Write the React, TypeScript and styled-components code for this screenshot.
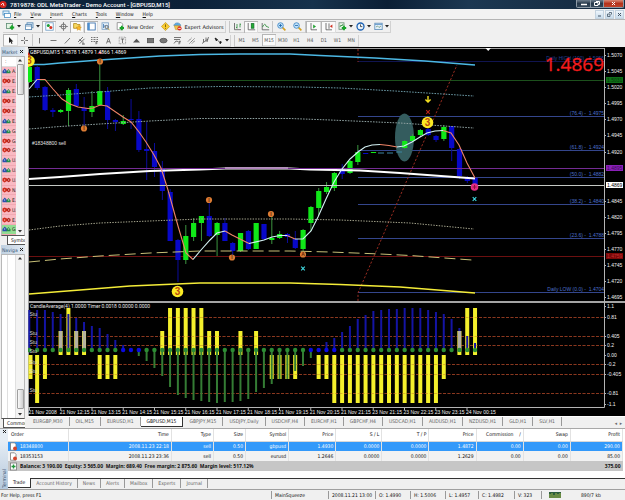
import React from "react";
import styled, { createGlobalStyle } from "styled-components";

const UI = '"DejaVu Sans Condensed", "DejaVu Sans", sans-serif';
const CHART = '"Liberation Sans", Arial, sans-serif';

const Global = createGlobalStyle`
  * { box-sizing: border-box; }
  body { margin: 0; background: #f0f0f0; }
  button { font: inherit; color: inherit; border: 0; padding: 0; margin: 0; background: none; }
`;

const Window = styled.div`
  display: flex;
  flex-direction: column;
  min-height: 100vh;
  overflow: hidden;
  font: 5px/8px ${UI};
  color: #111;
  background: #f0f0f0;
`;

/* ---------- title and menu ---------- */

const TitleBar = styled.header`
  display: flex;
  align-items: center;
  height: 9px;
  gap: 2px;
  color: #fff;
  background: linear-gradient(90deg, #10263c 0%, #0c2138 30%, #16324c 50%, #0b1f35 62%, #1c3852 75%, #14293f 100%);
`;

const Title = styled.h1`
  flex: 1;
  margin: 0;
  font: 500 6px/9px Roboto, "Noto Sans", sans-serif;
  white-space: nowrap;
`;

const WindowButtons = styled.div`
  display: flex;
  align-self: flex-start;
  height: 8px;
  margin-right: 1px;
  border: 1px solid #8d9aa6;
  border-top: 0;
  border-radius: 0 0 2px 2px;
  overflow: hidden;
`;

const WindowButton = styled.button<{ $close?: boolean }>`
  display: grid;
  place-items: center;
  width: ${(p) => (p.$close ? 20 : 13)}px;
  background: ${(p) =>
    p.$close
      ? "linear-gradient(#d98a78, #b5331c 50%, #c0442c)"
      : "linear-gradient(#6f7f8e, #26384a 50%, #34485a)"};
  border-left: 1px solid #8d9aa6;
  &:first-child { border-left: 0; }
`;

const MenuBar = styled.nav`
  display: flex;
  align-items: center;
  height: 11px;
  padding-left: 2px;
  background: #f2f2f2;
  border-bottom: 1px solid #b4b4b4;
`;

const MenuItems = styled.div`
  display: flex;
  flex: 1;
  gap: 9px;
  padding-left: 3px;
`;

const MenuItem = styled.button`
  line-height: 9px;
  &::first-letter { text-decoration: underline; }
`;

const MdiButton = styled.button`
  display: grid;
  place-items: center;
  width: 9px;
  height: 9px;
  margin-right: 1px;
  background: linear-gradient(#eef5fb, #c9dcec);
  border: 1px solid #c3d2df;
`;

/* ---------- toolbars ---------- */

const Toolbar = styled.div`
  display: flex;
  align-items: center;
  height: 14px;
  padding-left: 3px;
  & + & { height: 13px; }
`;

const Band = styled.div`
  display: flex;
  align-items: center;
  height: 12px;
  border: 1px solid #d2d2d2;
  border-width: 0 1px 1px 0;
  & + & { margin-left: 3px; border-left: 1px solid #c6c6c6; }
`;

const Group = styled.div<{ $n: number; $w: number }>`
  display: grid;
  grid-template-columns: repeat(${(p) => p.$n}, 1fr);
  width: ${(p) => p.$w}px;
  height: 12px;
  & + & { border-left: 1px solid #c6c6c6; }
`;

const Tool = styled.button<{ $on?: boolean }>`
  display: grid;
  place-items: center;
  height: 12px;
  color: #555;
  background: ${(p) => (p.$on ? "#fafafa" : "transparent")};
  box-shadow: ${(p) => (p.$on ? "inset 1px 1px #b5b5b5, inset -1px -1px #dcdcdc" : "none")};
`;

const WideTool = styled.button<{ $w: number }>`
  display: flex;
  align-items: center;
  justify-content: center;
  gap: 2px;
  width: ${(p) => p.$w}px;
  height: 12px;
  font-family: "DejaVu Sans", sans-serif;
  white-space: nowrap;
`;

/* ---------- workspace ---------- */

const Workspace = styled.main`
  display: grid;
  grid-template-columns: 28px minmax(0, 1fr);
`;

const SideColumn = styled.aside`
  display: flex;
  flex-direction: column;
  padding: 0 3px 0 1px;
  overflow: hidden;
`;

const PanelHead = styled.div`
  display: flex;
  justify-content: space-between;
  align-items: center;
  height: 9px;
  padding: 0 1px;
  color: #3c5a78;
  background: linear-gradient(90deg, #bfd0e0, #e2eaf2);
`;

const PanelBody = styled.div<{ $h?: number }>`
  display: flex;
  ${(p) => (p.$h ? `height: ${p.$h}px;` : "flex: 1;")}
  background: #fff;
  border: 1px solid #b8b8b8;
  border-bottom-color: #555;
  overflow: hidden;
`;

const Quotes = styled.div`
  display: flex;
  flex-direction: column;
  flex: 1;
  overflow: hidden;
`;

const QuotesHead = styled.div`
  height: 10px;
  padding-left: 3px;
  border-bottom: 1px solid #ddd;
`;

const Quote = styled.div<{ $up: boolean; $hit?: boolean }>`
  display: flex;
  flex: 1;
  align-items: center;
  gap: 1px;
  white-space: nowrap;
  color: #222;
  background: ${(p) => (p.$hit ? "#93dc93" : "#f9b9c2")};
  border-bottom: 1px solid #f1a9b3;
  & > svg { color: ${(p) => (p.$up ? "#2a4fae" : "#d02c1c")}; flex: none; }
`;

const Tree = styled.div`
  flex: 1;
  margin-left: 5px;
  border: 1px solid #e0e0e0;
  border-width: 0 1px;
`;

const Scroll = styled.div`
  display: flex;
  flex-direction: column;
  align-items: center;
  justify-content: space-between;
  width: 8px;
  padding: 2px 0;
  background: #f3f3f3;
`;

const Thumb = styled.div<{ $h: number; $low?: boolean }>`
  width: 7px;
  height: ${(p) => p.$h}px;
  margin: ${(p) => (p.$low ? "auto 0 4px" : "2px 0 auto")};
  background: linear-gradient(90deg, #fafafa, #cfcfcf);
  border: 1px solid #a0a0a0;
  border-radius: 1px;
`;

const SideTab = styled.button<{ $inset: number }>`
  align-self: stretch;
  height: 9px;
  margin-left: ${(p) => p.$inset}px;
  padding-left: 3px;
  overflow: hidden;
  text-align: left;
  white-space: nowrap;
  line-height: 8px;
  background: #fff;
  border: 1px solid #555;
  border-width: 0 0 1px 1px;
`;

const ChartColumn = styled.section`
  display: flex;
  flex-direction: column;
`;

const Plot = styled.svg`
  display: block;
  width: 100%;
  height: auto;
  background: #000;
  font: 5px ${CHART};
`;

const ChartTabs = styled.div`
  display: flex;
  height: 12px;
  padding-right: 3px;
  color: #666;
  border-top: 1px solid #fff;
`;

const ChartTab = styled.button<{ $on?: boolean }>`
  height: ${(p) => (p.$on ? 10 : 9)}px;
  padding: 0 6px;
  line-height: 9px;
  white-space: nowrap;
  color: ${(p) => (p.$on ? "#111" : "inherit")};
  background: ${(p) => (p.$on ? "#fff" : "transparent")};
  border-right: 1px solid ${(p) => (p.$on ? "#333" : "#999")};
  border-bottom: ${(p) => (p.$on ? "1px solid #333" : "0")};
  &:first-child { padding-left: 5px; }
`;

const Spacer = styled.span`
  flex: 1;
`;

/* ---------- terminal ---------- */

const Terminal = styled.section`
  display: grid;
  grid-template-columns: 8px minmax(0, 1fr);
  border-top: 1px solid #a8a8a8;
`;

const TerminalSide = styled.div`
  display: flex;
  flex-direction: column;
  align-items: center;
  justify-content: space-between;
  padding: 0 0 1px;
  background: linear-gradient(#e6edf4 20%, #b4c8dc);
  color: #35506e;
`;

const Vertical = styled.span`
  writing-mode: vertical-rl;
  transform: rotate(180deg);
  line-height: 8px;
`;

const TerminalBody = styled.div`
  padding-right: 2px;
  background: #fff;
`;

const Orders = styled.table`
  width: 100%;
  table-layout: fixed;
  border-collapse: collapse;
  th, td {
    height: 10px;
    padding: 0 2px;
    font-weight: normal;
    line-height: 9px;
    text-align: right;
    white-space: nowrap;
    border-right: 1px solid #e2e2e2;
  }
  th { height: 12px; border-bottom: 1px solid #d8d8d8; }
  th:first-child { text-align: left; padding-left: 3px; }
  td:first-child { text-align: left; padding-left: 1px; }
`;

const OrderRow = styled.tr<{ $selected?: boolean }>`
  color: ${(p) => (p.$selected ? "#fff" : "#111")};
  background: ${(p) => (p.$selected ? "#3399fa" : "#f2f2f2")};
`;

const TotalRow = styled.tr`
  background: #c6c6c6;
  && td { font: bold 5px/9px "Noto Sans", "Open Sans", sans-serif; border: 0; }
`;

const WithIcon = styled.span`
  display: flex;
  align-items: center;
  gap: 2px;
`;

const TerminalTabs = styled.div`
  display: flex;
  height: 11px;
  margin: 7px -2px 0 0;
  color: #666;
  background: #f0f0f0;
  border-top: 1px solid #333;
`;

const TerminalTab = styled.button<{ $on?: boolean }>`
  height: ${(p) => (p.$on ? 10 : 9)}px;
  margin-top: ${(p) => (p.$on ? -1 : 0)}px;
  padding: 0 5px;
  line-height: 9px;
  color: ${(p) => (p.$on ? "#111" : "inherit")};
  background: ${(p) => (p.$on ? "#fff" : "transparent")};
  border-right: 1px solid ${(p) => (p.$on ? "#333" : "#999")};
  border-bottom: ${(p) => (p.$on ? "1px solid #333" : "0")};
`;

const StatusBar = styled.footer`
  display: grid;
  grid-template-columns: 271fr 57fr 47fr 35fr 35fr 33fr 36fr 27fr 84fr;
  align-items: center;
  height: 11px;
  border-top: 1px solid #a0a0a0;
`;

const Status = styled.span`
  display: flex;
  align-items: center;
  gap: 20px;
  padding-left: 3px;
  white-space: nowrap;
  border-left: 1px solid #999;
  &:first-child { border: 0; padding-left: 1px; }
  &:last-child { padding-left: 7px; }
`;

/* ---------- icons ---------- */

const Ico = ({ children, w = 9 }: { children: React.ReactNode; w?: number }) => (
  <svg width={w} height={9} viewBox={`0 0 ${w} 9`} fill="none" stroke="currentColor" strokeWidth={0.8} aria-hidden="true">
    {children}
  </svg>
);

const Caret = () => (
  <svg width="4" height="3" viewBox="0 0 4 3" aria-hidden="true"><path d="M0 0h4L2 2.5z" fill="#222" /></svg>
);

const Cross = ({ color = "#222" }: { color?: string }) => (
  <svg width="5" height="5" viewBox="0 0 5 5" aria-hidden="true"><path d="M1 1l3 3M4 1L1 4" stroke={color} strokeWidth="1" /></svg>
);

const Arrow = ({ d }: { d: string }) => (
  <svg width="4" height="3" viewBox="0 0 4 3" aria-hidden="true"><path d={d} fill="#333" /></svg>
);

const Plus = ({ x, y }: { x: number; y: number }) => (
  <path d={`M${x - 2.2} ${y}h4.4M${x} ${y - 2.2}v4.4`} stroke="#18a428" strokeWidth="1.8" />
);

const I = {
  logo: <Ico w={8}><circle cx="3" cy="4.5" r="3.6" fill="#d3241c" stroke="none" /><path d="M1 5l2-2 1 3" stroke="#fff" /></Ico>,
  mdi: <Ico><rect x="1" y="1" width="6" height="4" fill="#dff0fc" stroke="#4a8ec2" /><rect x="2.5" y="3.5" width="6" height="4" fill="#fff" stroke="#4a8ec2" /></Ico>,
  newChart: <Ico><rect x=".5" y="1.5" width="6" height="5" fill="#e4f4e4" stroke="#5c8c74" /><Plus x={6} y={5.5} /></Ico>,
  profiles: <Ico><rect x="2" y=".8" width="6" height="5" fill="#d5e8f8" stroke="#5484ae" /><rect x=".6" y="2.6" width="6" height="5" fill="#fff" stroke="#5484ae" /><path d="M1 4h5" stroke="#5484ae" /></Ico>,
  market: <Ico><rect x=".8" y=".8" width="7.4" height="7.4" fill="#fff" stroke="#6a9ac4" /><circle cx="3.3" cy="3.4" r="1.5" fill="#1a9c34" stroke="none" /><circle cx="5.8" cy="5.6" r="1.5" fill="#d53424" stroke="none" /></Ico>,
  target: <Ico><circle cx="4.5" cy="4.5" r="2.5" /><path d="M4.5 0v9M0 4.5h9" strokeWidth=".6" /></Ico>,
  folder: <Ico><path d="M.6 1.5h3l.6 1H7v3.8H.6z" fill="#f6d860" stroke="#b48c20" /><path d="M5.8 3.5l.8 1.6 1.8.2-1.3 1.2.3 1.8-1.6-.9-1.6.9.3-1.8L3 5.3l2-.2z" fill="#fcb828" stroke="#c88410" strokeWidth=".4" /></Ico>,
  terminal: <Ico><rect x=".8" y="1" width="7.4" height="7" fill="#fff" stroke="#2c66a8" /><rect x=".8" y="1" width="2" height="7" fill="#4b8fd0" stroke="none" /></Ico>,
  tester: <Ico><rect x="1" y=".8" width="6.5" height="6.5" fill="#e4f0fa" stroke="#7aa0c4" /><path d="M2.5 2v4M4 3v2" stroke="#3874b0" /><circle cx="5.6" cy="5" r="1.6" fill="#cfe4f4" /><path d="M6.8 6.2l1.7 2" stroke="#c49420" /></Ico>,
  order: <Ico><path d="M1.2.6h4l1.5 1.5v5.6H1.2z" fill="#fff" stroke="#888" /><Plus x={5.8} y={6} /></Ico>,
  diamond: <Ico><path d="M4.5.4l4.1 4.1-4.1 4.1L.4 4.5z" fill="#f8cc30" stroke="#b88a10" strokeWidth=".6" /><path d="M4.5 2.4v2.8M4.5 6v.8" stroke="#704c00" /></Ico>,
  expert: <Ico><path d="M.8 3.5C1.5 0 7 0 7.8 3.5z" fill="#58a8e0" stroke="#2c74b0" strokeWidth=".5" /><path d="M1.3 3.8h6l-1 3.8H2.5z" fill="#f2c850" stroke="#b88c20" strokeWidth=".5" /><circle cx="6.5" cy="6.4" r="2.1" fill="#da2c20" stroke="none" /><path d="M5.2 6.4h2.6" stroke="#fff" /></Ico>,
  bars: <Ico><path d="M1.5 1v6.7h6.5" stroke="#555" /><path d="M4 2v4.5M4 5.5h-1M7 1.5v4M7 2.3h1" stroke="#2a8c38" /></Ico>,
  candles: <Ico><path d="M1.2 1v6.8h7" stroke="#555" /><rect x="4.3" y="1.6" width="2.6" height="4.6" fill="#20b030" stroke="#14702c" /></Ico>,
  line: <Ico><path d="M1.2 1v6.8h7" stroke="#555" /><path d="M1.5 5Q4 0 5 4.2L8 5.5" stroke="#2a8c38" /></Ico>,
  zoomIn: <Ico><path d="M5.4 5.4l3 3" stroke="#d4a024" strokeWidth="1.6" /><circle cx="3.5" cy="3.5" r="2.8" fill="#bfe2fa" stroke="#3880c0" /><path d="M2 3.5h3M3.5 2v3" stroke="#1c64a8" /></Ico>,
  zoomOut: <Ico><path d="M5.4 5.4l3 3" stroke="#d4a024" strokeWidth="1.6" /><circle cx="3.5" cy="3.5" r="2.8" fill="#bfe2fa" stroke="#3880c0" /><path d="M2 3.5h3" stroke="#1c64a8" /></Ico>,
  scroll: <Ico><path d="M2 1v6.8h6" stroke="#555" /><path d="M4.2 2.5v4L7 4.5z" fill="#20a030" stroke="none" /></Ico>,
  shift: <Ico><path d="M2 1v6.8h6M5 1.4v5.4" stroke="#555" /><path d="M8.4 2.5v3.6L5.8 4.3z" fill="#d03020" stroke="none" /></Ico>,
  indicators: <Ico><rect x="1" y=".8" width="5" height="6.5" fill="#e6f2e6" stroke="#6a8a74" /><path d="M2 5l1-2 1 1 1-2" stroke="#2a8c38" /><Plus x={6} y={6} /></Ico>,
  clock: <Ico><circle cx="4.5" cy="4.5" r="3.5" fill="#eaf4fc" stroke="#1c62b4" strokeWidth="1.3" /><path d="M4.5 2.4v2.2h1.8" stroke="#333" /></Ico>,
  template: <Ico><rect x=".8" y="1.2" width="7.4" height="6.4" fill="#e2effa" stroke="#5c8cb8" /><path d="M1 2.4h7" stroke="#4a86c0" /><path d="M2 5l1.5-1L5 5.5 7 4" stroke="#4c7c4c" strokeWidth=".6" /></Ico>,
  cursor: <Ico><path d="M3 1v6l1.5-1.3L5.6 8l.9-.4L5.5 5.4h1.8z" fill="#222" stroke="none" /></Ico>,
  cross: <Ico><path d="M4.5 1v2.7M4.5 5.3V8M1 4.5h2.7M5.3 4.5H8" /></Ico>,
  vline: <Ico><path d="M4.5 2v5.5" /></Ico>,
  hline: <Ico><path d="M1.5 4.5H7.5" /></Ico>,
  trend: <Ico><path d="M1.8 7.5L7 2" /></Ico>,
  channel: <Ico><path d="M1 6l5-5M2.5 7.8l5-5M2 3.5l3 2M5 8h3M6 5.5v3" /></Ico>,
  fibo: <Ico><path d="M1 1.5h7M1 3.5h7M1 5.5h4" strokeDasharray="1 .5" /><path d="M6 5.3v3M6 5.5h2M6 7h1.5" /></Ico>,
  textA: <Ico><path d="M2.5 7.5L4.5 2l2 5.5M3.2 5.7h2.6" /></Ico>,
  label: <Ico><rect x="1.2" y="1.2" width="6.4" height="6.6" strokeWidth=".5" strokeDasharray="1 .6" /><path d="M2.8 3h3.4M4.5 3v4" /></Ico>,
  tri: <Ico><path d="M1 6.5L4.5 2.8 8 6.5z" fill="#555" stroke="none" /></Ico>,
  rect: <Ico><rect x="1.4" y="2.5" width="6.2" height="4.2" fill="#777" stroke="#555" /></Ico>,
  oval: <Ico><ellipse cx="4.5" cy="4.6" rx="3.6" ry="2.3" fill="#777" stroke="#555" /></Ico>,
  fan: <Ico><path d="M1 1.5h7M1 3.5h6M1 7.5q2-4 4-2" /><path d="M6 5v3.4M6 5.3h2M6 6.8h1.5" /></Ico>,
  parallels: <Ico><path d="M1 5.5L4.5 2M2.5 7.5l5-5M5 7.5l3-3" strokeDasharray="1.5 .4" /></Ico>,
  fork: <Ico><path d="M1 7.5L7 3M2.5 3v3M5 1.5v4M7.5 1L6 6" /></Ico>,
  arrows: <Ico><path d="M1 2l2.5 1.5L2.4 5z" fill="#333" /><path d="M4 4.5l2 2M6.5 5v3M5 7l3-1" /></Ico>,
};

type ToolDef = [keyof typeof I, string, boolean?];

const Tools = ({ items, w }: { items: ToolDef[]; w: number }) => (
  <Group $n={items.length} $w={w}>
    {items.map(([k, name, on]) => (
      <Tool key={k} $on={on} aria-label={name}>{I[k]}</Tool>
    ))}
  </Group>
);

const Drop = ({ k, name, w }: { k: keyof typeof I; name: string; w: number }) => (
  <WideTool $w={w} aria-label={name}>{I[k]}<Caret /></WideTool>
);

/* ---------- chart data ---------- */

const STEP = 7.82;
const bx = (n: number) => 29.3 + STEP * n;

// [bar, high, top, bottom, low, rising]
const candles: [number, number, number, number, number, 0 | 1][] = [
  [0, 67, 67, 82, 83, 1], [1, 66, 67, 88, 90, 0], [2, 86, 87, 110, 111, 0], [3, 108, 110, 112, 117, 0],
  [4, 109, 110, 112, 113, 1], [5, 88, 90, 111, 126, 1], [6, 84, 89, 106, 107, 0], [7, 97, 108, 111, 127, 0],
  [8, 91, 106, 112, 117, 1], [9, 62, 91, 105, 106, 1], [10, 87, 91, 120, 129, 0], [11, 119, 120, 122, 131, 0],
  [12, 115, 121, 124, 125, 1], [13, 99, 119, 120, 129, 0], [14, 111, 119, 150, 152, 0], [15, 122, 149, 151, 180, 0],
  [16, 143, 151, 167, 177, 0], [17, 161, 169, 191, 200, 0], [18, 189, 192, 241, 241, 0], [19, 239, 240, 260, 282, 0],
  [20, 225, 236, 260, 264, 1], [21, 218, 223, 237, 241, 1], [22, 216, 216, 223, 241, 1], [23, 203, 216, 236, 237, 0],
  [24, 222, 223, 235, 256, 1], [25, 218, 223, 241, 241, 0], [26, 242, 243, 251, 256, 0], [27, 233, 233, 251, 252, 1],
  [28, 230, 231, 249, 250, 0], [29, 223, 223, 249, 249, 1], [30, 224, 224, 239, 240, 0], [31, 217, 238, 240, 244, 1],
  [32, 231, 234, 238, 239, 1], [33, 233, 234, 237, 243, 0], [34, 231, 239, 248, 249, 0], [35, 229, 230, 249, 253, 1],
  [36, 206, 207, 223, 231, 1], [37, 188, 191, 208, 215, 1], [38, 182, 187, 192, 194, 1], [39, 172, 173, 188, 191, 1],
  [40, 164, 169, 174, 179, 0], [41, 160, 161, 173, 174, 1], [42, 145, 152, 162, 165, 1], [43, 153, 153, 154, 154, 0],
  [44, 152, 152, 153, 153, 1], [48, 140, 141, 148, 149, 1], [49, 134, 136, 141, 142, 1], [50, 129, 130, 135, 137, 1],
  [51, 128, 129, 135, 136, 0], [52, 135, 136, 140, 142, 0], [53, 125, 127, 139, 141, 1], [54, 126, 126, 148, 161, 0],
  [55, 148, 149, 176, 179, 0], [56, 176, 177, 181, 183, 0], [57, 177, 178, 186, 187, 0],
];

const AVG_UP = "#d4f2f4";
const AVG_DOWN = "#f08468";
const average: [string, string][] = [
  [AVG_UP, "29,89 37,79.5"],
  [AVG_DOWN, "37,79.5 45,79.5 53,89 62,99 70,104 78,107 88,108.5 93,108 100,105 107,106 123,117 131,122 139,132 146,142 154,155 161,168 168,190 178,226 186,253 193,259.5"],
  [AVG_UP, "193,259.5 201,250 210,240 217,233 225,231"],
  [AVG_DOWN, "225,231 232,235 240,239 249,243.5"],
  [AVG_UP, "249,243.5 264,240 272,237 280,235.5 287,235.5"],
  [AVG_DOWN, "287,235.5 295,239"],
  [AVG_UP, "295,239 303,239 311,231 318,217 326,199 334,182 342,169 350,159 358,152 365,147 372,145 380,144.5"],
  [AVG_DOWN, "380,144.5 389,145.5 397,147"],
  [AVG_UP, "397,147 404,146 412,142 420,137 427,133 435,131 443,130.5"],
  [AVG_DOWN, "443,130.5 451,133 459,145 467,163 475,178"],
];

const bands: { c: string; w: number; dash?: string; p: string }[] = [
  { c: "#4cb8e4", w: 1.6, p: "29,64.5 44,64.5 60,63 100,60 130,58 160,56 200,54.5 240,54 290,54 320,55.5 375,58 425,61 475,65" },
  { c: "#6a98a4", w: 1, dash: "1.6 1.2", p: "29,97 60,95 100,92 150,88 220,86.5 300,87 340,88 395,91 474,96" },
  { c: "#8ea0a0", w: 1, dash: "1.6 1.2", p: "29,129 60,126.5 100,124 150,121 200,118.5 290,118.5 330,120 400,123 474,128" },
  { c: "#a8a890", w: 1, dash: "1.4 1.3", p: "29,230 60,226 100,223 150,221 200,219 290,219 340,220 410,223 474,229" },
  { c: "#c8c078", w: 1, dash: "11 5", p: "29,262 60,259 100,256 150,253 200,251 290,251 330,252 380,254 410,255.5 472,260" },
  { c: "#f4ec38", w: 1.7, p: "29,294 80,290 130,286 200,283 290,283 340,284.5 400,287 475,293" },
  { c: "#ffffff", w: 1.9, p: "29,179 60,177 100,174 150,171 200,169.5 225,168.5 290,168.5 310,169.5 360,170.5 400,173 475,178.5" },
];

const fibs: [number, string][] = [
  [61, "Daily HIGH (100) - 1.5056"], [116, "(76.4) -  1.4975"], [150, "(61.8) -  1.4924"], [177, "(50.0) -  1.4882"],
  [204, "(38.2) -  1.4840"], [238, "(23.6) -  1.4788"], [292, "Daily LOW (0.0) -  1.4704"],
];

const prices: [number, string][] = [
  [55, "1.5070"], [71, "1.5045"], [87, "1.5020"], [103, "1.4995"], [119, "1.4970"], [135, "1.4945"], [152, "1.4920"],
  [201, "1.4845"], [217, "1.4820"], [233, "1.4795"], [249, "1.4770"], [265, "1.4745"], [281, "1.4720"], [297, "1.4695"],
  [306, "1.1"], [317, "0.81"], [336, "0.405"], [345, "0.2"], [355, "0.00"], [364, "-0.2"], [374, "-0.405"], [393, "-0.81"], [404, "-1.1"],
];

const marks: [number, string, string, string][] = [
  [80, "#0f6e18", "#063c0a", "1.5031"], [168, "#8a20b8", "#3c0858", "1.4895"],
  [185, "#ffffff", "#000", "1.4869"], [256, "#7c0808", "#c03030", "1.4759"],
];

const times = ["21 Nov 2008", "21 Nov 12:15", "21 Nov 13:15", "21 Nov 14:15", "21 Nov 15:15", "21 Nov 16:15", "21 Nov 17:15",
  "21 Nov 18:15", "21 Nov 19:15", "21 Nov 20:15", "21 Nov 21:15", "23 Nov 21:15", "23 Nov 22:15", "23 Nov 23:15", "24 Nov 00:15"];

const levels = [317.5, 336.5, 345.5, 364.5, 374.5, 393.5];

// end of each momentum bar, measured from the row of dots
const momentum: (number | null)[] = [
  310, 310, 310, 312, 314, 314, 318, 322, 326, 328, 334, 340, 345, null, 356, 361, 368, 376, 387, 395, 398, 400, 401, 402, 403,
  402, 402, 401, 399, 392, 388, 384, 379, 379, 371, 366, 358, null, 342, 338, 332, 326, 319, 315, 311, 310, 309, 309, 308, 308,
  308, 310, 312, 314, 319, 328, 336, 343,
];
const blueDots = [12, 13, 14, 36, 37, 38, 39];

const span = (a: number, b: number) => Array.from({ length: b - a + 1 }, (_, i) => a + i);
const yellow: [number[], number, number][] = [
  [[5, ...span(18, 22), 56, 57], 308, 355],
  [[4, 6, 7, 17, 23, 24, 27, 29, 55], 331, 355],
  [[0, 2, 9, 10, 11, ...span(31, 34), 37, 38, 53], 355, 379],
  [[1, ...span(39, 52)], 355, 403],
];

const balls: [number, number, string][] = [
  [100, 61.5, "I"], [84, 128.5, "I"], [209, 200, "I"], [232, 257.5, "I"], [271, 214, "I"], [303, 254.5, "A"],
];

const Star = ({ x, y, c }: { x: number; y: number; c: string }) => (
  <path d={`M${x - 1.8} ${y - 1.8}l3.6 3.6M${x + 1.8} ${y - 1.8}l-3.6 3.6`} stroke={c} strokeWidth="1.1" />
);

const Three = ({ x, y }: { x: number; y: number }) => (
  <g>
    <circle cx={x} cy={y} r="5.8" fill="#fcea24" />
    <text x={x} y={y + 3.4} textAnchor="middle" fontSize="10" fontWeight="bold" fill="#b84a10">3</text>
  </g>
);

const PriceChart = () => (
  <Plot viewBox="28 47 597 369" role="img" aria-label="GBPUSD M15 price chart">
    <path d="M28.5 416V48.5H604.5" stroke="#a0a0a0" fill="none" />
    <path d="M29 80.5H604" stroke="#1c501c" />
    <path d="M29 256.5H604" stroke="#6c1010" />
    {levels.map((y) => (
      <path key={y} d={`M29 ${y}H604`} stroke="#7c2c20" strokeDasharray="3 1.5" />
    ))}
    {fibs.map(([y, t], i) => (
      <g key={t}>
        <path d={`M358 ${y + 0.5}H604`} stroke={i ? "#34468c" : "#101450"} />
        <text x="604" y={y - 1} textAnchor="end" fill={i ? "#4c70cc" : "#24409c"} xmlSpace="preserve">{t}</text>
      </g>
    ))}
    <path d="M358 49V62M358 301V293L457 65" stroke="#982c20" strokeDasharray="2.2 1.8" fill="none" />
    <ellipse cx="404.5" cy="137.5" rx="9.5" ry="24" fill="#345c5e" />

    {candles.map(([n, hi, top, bot, lo, up]) => (
      <g key={n} fill={up ? "#10e818" : "#0808c8"}>
        <rect x={bx(n) - 0.4} y={hi} width="1" height={lo - hi} fill={up ? "#3c9440" : "#0c0c9c"} />
        <rect x={bx(n) - 2.5} y={top} width="5.2" height={bot - top} />
      </g>
    ))}
    <path d="M378 153H384M387 153H393M396 152H402" stroke="#3c84a0" />
    {bands.map((b) => (
      <polyline key={b.p} points={b.p} fill="none" stroke={b.c} strokeWidth={b.w} strokeDasharray={b.dash} />
    ))}
    <path d="M29 168.5H604" stroke="#742c94" />
    <path d="M225 168H288" stroke="#c49ccc" strokeWidth="1.6" />
    <path d="M29 185.5H604" stroke="#c4c8c4" />
    {average.map(([c, p]) => (
      <polyline key={p} points={p} fill="none" stroke={c} strokeWidth="1.1" />
    ))}

    {balls.map(([x, y, t]) => (
      <g key={x}>
        <circle cx={x} cy={y} r="3.1" fill="#dc7c34" />
        <text x={x} y={y + 1.8} textAnchor="middle" fontWeight="bold" fill="#5c2408">{t}</text>
      </g>
    ))}
    <Three x={427.5} y={122.5} />
    <Three x={177.5} y={291.5} />
    <Three x={29} y={61} />
    <circle cx="474.5" cy="187" r="3.8" fill="#e42c84" />
    <path d="M472.5 187h4M474.5 185v4" stroke="#901040" />
    <Star x={303} y={268.5} c="#40d8e0" />
    <Star x={474.5} y={199} c="#40d8e0" />
    <Star x={428} y={112} c="#b82018" />
    <path d="M100 50.5l2 3.5h-4zM28.5 52l2 3.5h-3z" fill="#d82820" />
    <path d="M428 96v6M425.4 99.5l2.6 2.6 2.6-2.6" stroke="#f4e020" strokeWidth="1.4" fill="none" />
    <path d="M485.5 48h5.4l-2.7 3z" fill="#fff" />

    <text x="30" y="54" fontFamily="Roboto, sans-serif" fill="#fff">GBPUSD,M15 1.4878 1.4879 1.4866 1.4869</text>
    <text x="32" y="145" fill="#e4e4e4">#18348800 sell</text>
    <text x="604" y="71" textAnchor="end" fontSize="19" fontFamily='"Open Sans", "Noto Sans", sans-serif' fill="#f41c1c" stroke="#f41c1c" strokeWidth=".3">1.4869</text>

    {yellow.map(([bars, y1, y2]) => bars.map((n) => (
      <rect key={`${n}-${y1}`} x={Math.max(28.5, bx(n) - 2)} y={y1} width="4" height={y2 - y1} fill="#f4f02c" />
    )))}
    {levels.map((y) => (
      <path key={y} d={`M29 ${y}H604`} stroke="#a85020" strokeOpacity=".35" strokeDasharray="3 1.5" />
    ))}
    {momentum.map((y, n) => {
      if (y === null) return null;
      const up = y < 350;
      const overlay = [4, 6, 7, 55].includes(n);
      return (
        <g key={n}>
          <rect x={bx(n) - 1} y={up ? y : 350} width="2" height={Math.abs(350 - y)} fill={up ? "#1414a4" : "#347c34"} />
          {overlay && <rect x={bx(n) - 1.6} y="331" width="3.4" height="20" fill="#b4b0a4" />}
        </g>
      );
    })}
    {momentum.map((_, n) => (
      <circle key={n} cx={bx(n)} cy="350" r="2.2" fill={blueDots.includes(n) ? "#0a0ae0" : "#2c8c34"} />
    ))}
    {[316, 335, 344, 353, 364, 373, 392].map((y) => (
      <text key={y} x="29.5" y={y} fill="#d8d8d8">Stu</text>
    ))}
    <text x="30" y="308" fontFamily="Roboto, sans-serif" fill="#e4e4e4">CandleAverage(4) 1.0000 Timer 0.0018 0.0000 0.0000</text>

    <path d="M28 302H625" stroke="#a4a4a4" strokeWidth="2" />
    <path d="M604.5 48V407.5M28 407.5H604.5" stroke="#b4b4b4" fill="none" />
    {prices.map(([y, t]) => (
      <g key={t}>
        <path d={`M604 ${y + 0.5}h2`} stroke="#b4b4b4" />
        <text x="607" y={y + 2} fill="#f0f0f0">{t}</text>
      </g>
    ))}
    {marks.map(([y, bg, fg, t]) => (
      <g key={t}>
        <rect x="606" y={y - 3} width="17" height="6" fill={bg} />
        <text x="607" y={y + 2} fill={fg}>{t}</text>
      </g>
    ))}
    {times.map((t, i) => (
      <g key={i}>
        <path d={`M${29.5 + i * 31.25} 408v2`} stroke="#b4b4b4" />
        <text x={28.5 + i * 31.25} y="414" fill="#f0f0f0">{t}</text>
      </g>
    ))}
  </Plot>
);

/* ---------- page data ---------- */

const quotes: [string, boolean][] = [
  ["A.", true], ["E.", false], ["E.", true], ["E.", false], ["E.", false], ["E.", true], ["G.", true], ["G.", false], ["G.", false],
  ["U.", true], ["U.", true], ["U.", false], ["N.", false], ["E.", true], ["U.", false], ["E.", false], ["G.", true],
];

const chartTabs = ["EURGBP,M30", "OIL,M15", "EURUSD,H1", "GBPUSD,M15", "GBPJPY,M15", "USDJPY,Daily", "USDCHF,H4", "EURCHF,H1",
  "GBPCHF,H4", "USDCAD,H1", "AUDUSD,H1", "NZDUSD,H1", "GLD,H1", "SLV,H1"];

const columns: [string, number][] = [["Order", 60], ["Time", 103], ["Type", 42], ["Size", 32], ["Symbol", 43], ["Price", 47],
  ["S / L", 46], ["T / P", 47], ["Price", 47], ["Commission \u00a0\u00a0\u00a0∕", 47], ["Swap", 47], ["Profit", 52]];

const orders = [
  ["18348800", "2008.11.23 22:18", "sell", "0.50", "gbpusd", "1.4930", "0.0000", "0.0000", "1.4872", "0.00", "0.00", "290.00"],
  ["18353153", "2008.11.23 23:36", "sell", "0.50", "eurusd", "1.2646", "0.0000", "0.0000", "1.2629", "0.00", "0.00", "85.00"],
];

const OrderIcon = () => (
  <Ico><path d="M1.5.8h4L7 2.3v5.9H1.5z" fill="#fff" stroke="#777" /><circle cx="6" cy="6.4" r="1.9" fill="#d4442c" stroke="none" /></Ico>
);

export default function App() {
  return (
    <Window>
      <Global />
      <TitleBar>
        {I.logo}
        <Title>7819878: ODL MetaTrader - Demo Account - [GBPUSD,M15]</Title>
        <WindowButtons>
          <WindowButton aria-label="Minimize"><svg width="6" height="5"><path d="M0 3.5h6" stroke="#fff" strokeWidth="1.6" /></svg></WindowButton>
          <WindowButton aria-label="Restore"><svg width="6" height="5"><path d="M2 .5h3.5v3H4M.5 1.5h3.5v3H.5z" stroke="#fff" fill="none" /></svg></WindowButton>
          <WindowButton $close aria-label="Close"><Cross color="#fff" /></WindowButton>
        </WindowButtons>
      </TitleBar>
      <MenuBar>
        {I.mdi}
        <MenuItems>
          {["File", "View", "Insert", "Charts", "Tools", "Window", "Help"].map((m) => <MenuItem key={m}>{m}</MenuItem>)}
        </MenuItems>
        <MdiButton aria-label="Minimize chart"><svg width="5" height="5"><path d="M1 4h3" stroke="#456" /></svg></MdiButton>
        <MdiButton aria-label="Restore chart"><svg width="5" height="5"><path d="M2 .5h2.5v2M.5 2h2.5v2.5H.5z" stroke="#456" strokeWidth=".8" fill="none" /></svg></MdiButton>
        <MdiButton aria-label="Close chart"><Cross color="#456" /></MdiButton>
      </MenuBar>
      <Toolbar>
        <Band>
          <Drop k="newChart" name="New chart" w={20} />
          <Drop k="profiles" name="Profiles" w={19} />
          <Tools w={70} items={[["market", "Market Watch", true], ["target", "Data Window"], ["folder", "Navigator", true], ["terminal", "Terminal", true], ["tester", "Strategy Tester"]]} />
          <WideTool $w={46}>{I.order}New Order</WideTool>
          <WideTool $w={14} aria-label="MetaEditor">{I.diamond}</WideTool>
          <WideTool $w={53}>{I.expert}Expert Advisors</WideTool>
        </Band>
        <Band>
          <Tools w={42} items={[["bars", "Bar chart"], ["candles", "Candlesticks", true], ["line", "Line chart"]]} />
          <Tools w={33} items={[["zoomIn", "Zoom in"], ["zoomOut", "Zoom out"]]} />
          <Tools w={31} items={[["scroll", "Auto scroll", true], ["shift", "Chart shift", true]]} />
          <Drop k="indicators" name="Indicators" w={18} />
          <Drop k="clock" name="Periods" w={18} />
          <Drop k="template" name="Templates" w={18} />
        </Band>
      </Toolbar>
      <Toolbar>
        <Band>
          <Tools w={29} items={[["cursor", "Cursor", true], ["cross", "Crosshair"]]} />
          <Tools w={180} items={[["vline", "Vertical line"], ["hline", "Horizontal line"], ["trend", "Trendline"], ["channel", "Channel"],
            ["fibo", "Fibonacci"], ["textA", "Text"], ["label", "Label"], ["tri", "Triangle"], ["rect", "Rectangle"],
            ["oval", "Ellipse"], ["fan", "Fan"], ["parallels", "Parallels"], ["fork", "Pitchfork"]]} />
          <Drop k="arrows" name="Arrows" w={18} />
        </Band>
        <Band>
          <Group $n={9} $w={123}>
            {["M1", "M5", "M15", "M30", "H1", "H4", "D1", "W1", "MN"].map((p) => <Tool key={p} $on={p === "M15"}>{p}</Tool>)}
          </Group>
        </Band>
      </Toolbar>

      <Workspace>
        <SideColumn>
          <PanelHead>Market<Cross /></PanelHead>
          <PanelBody $h={180}>
            <Quotes>
              <QuotesHead>:</QuotesHead>
              {quotes.map(([s, up], i) => (
                <Quote key={i} $up={up} $hit={i === 16}>
                  <svg width="9" height="6" viewBox="0 0 9 6" aria-hidden="true">
                    <path d={up ? "M.5 3L2.8.6 5 3v2.2H.5z" : "M.5 1.5L2.5.6 5 1.5v2.4L2.6 5.4.5 4z"} fill="currentColor" />
                    <path d={up ? "M4.5 3.4L6.5 1l2 2.4v1.8h-4z" : "M4.8 2L6.6.8 8.5 2v2L6.6 5.2 4.8 4z"} fill={up ? "#258c4c" : "#b4241c"} />
                    <path d="M2 3h1.2M6 3h1.2" stroke="#fff" strokeWidth=".8" />
                  </svg>
                  {s}
                </Quote>
              ))}
            </Quotes>
            <Scroll><Arrow d="M0 2.5h4L2 0z" /><Thumb $h={31} /><Arrow d="M0 0h4L2 2.5z" /></Scroll>
          </PanelBody>
          <SideTab $inset={6}>Symbols</SideTab>
          <PanelHead>Naviga<Cross /></PanelHead>
          <PanelBody>
            <Tree />
            <Scroll><Arrow d="M0 2.5h4L2 0z" /><Thumb $h={20} $low /><Arrow d="M0 0h4L2 2.5z" /></Scroll>
          </PanelBody>
          <SideTab $inset={2}>Common</SideTab>
        </SideColumn>
        <ChartColumn>
          <PriceChart />
          <ChartTabs>
            {chartTabs.map((t) => <ChartTab key={t} $on={t === "GBPUSD,M15"}>{t}</ChartTab>)}
            <Spacer />
            <button aria-label="Scroll tabs">◂&nbsp;&nbsp;▸</button>
          </ChartTabs>
        </ChartColumn>
      </Workspace>

      <Terminal>
        <TerminalSide><Cross /><Vertical>Terminal</Vertical></TerminalSide>
        <TerminalBody>
          <Orders>
            <colgroup>{columns.map(([, w], i) => <col key={i} width={w} />)}</colgroup>
            <thead><tr>{columns.map(([c], i) => <th key={i}>{c}</th>)}</tr></thead>
            <tbody>
              {orders.map((row, r) => (
                <OrderRow key={row[0]} $selected={r === 0}>
                  {row.map((c, i) => <td key={i}>{i ? c : <WithIcon><OrderIcon />{c}</WithIcon>}</td>)}
                </OrderRow>
              ))}
              <TotalRow>
                <td colSpan={11}>
                  <WithIcon>
                    <Ico><rect x="1.5" y="1" width="6" height="7" fill="#fff" stroke="#777" /><path d="M4.5 2.5v4M2.5 4.5h4" stroke="#20983c" strokeWidth="1.4" /></Ico>
                    Balance: 3 190.00&nbsp; Equity: 3 565.00&nbsp; Margin: 689.40&nbsp; Free margin: 2 875.60&nbsp; Margin level: 517.12%
                  </WithIcon>
                </td>
                <td>375.00</td>
              </TotalRow>
            </tbody>
          </Orders>
          <TerminalTabs>
            {["Trade", "Account History", "News", "Alerts", "Mailbox", "Experts", "Journal"].map((t, i) => (
              <TerminalTab key={t} $on={i === 0}>{t}</TerminalTab>
            ))}
          </TerminalTabs>
        </TerminalBody>
      </Terminal>
      <StatusBar>
        {["For Help, press F1", "MainSqueeze", "2008.11.21 13:00", "O: 1.4990", "H: 1.5006", "L: 1.4957", "C: 1.4982", "V: 323"].map((s) => (
          <Status key={s}>{s}</Status>
        ))}
        <Status>
          <svg width="12" height="6" aria-hidden="true">
            <rect width="12" height="6" fill="#2c5c3c" />
            <path d="M1 6V2M3 6V1M5 6V3M7 6V1M9 6V2M11 6V1" stroke="#a4b84c" />
          </svg>
          890/7 kb
        </Status>
      </StatusBar>
    </Window>
  );
}
